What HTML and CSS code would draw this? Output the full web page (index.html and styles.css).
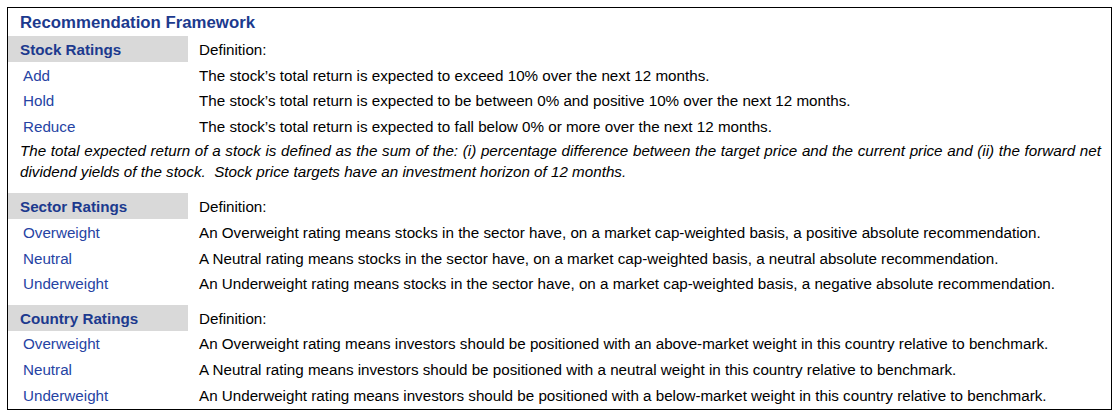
FILE: index.html
```html
<!DOCTYPE html>
<html>
<head>
<meta charset="utf-8">
<link rel="stylesheet" href="styles.css">
</head>
<body>
<div class="frame">
  <div class="title">Recommendation Framework</div>

  <div class="section">
    <div class="head-label">Stock Ratings</div><div class="head-def">Definition:</div>
    <div class="label">Add</div><div class="def">The stock’s total return is expected to exceed 10% over the next 12 months.</div>
    <div class="label">Hold</div><div class="def">The stock’s total return is expected to be between 0% and positive 10% over the next 12 months.</div>
    <div class="label">Reduce</div><div class="def">The stock’s total return is expected to fall below 0% or more over the next 12 months.</div>
  </div>
  <p class="note">The total expected return of a stock is defined as the sum of the: (i) percentage difference between the target price and the current price and (ii) the forward net dividend yields of the stock.&nbsp; Stock price targets have an investment horizon of 12 months.</p>

  <div class="section">
    <div class="head-label">Sector Ratings</div><div class="head-def">Definition:</div>
    <div class="label">Overweight</div><div class="def">An Overweight rating means stocks in the sector have, on a market cap-weighted basis, a positive absolute recommendation.</div>
    <div class="label">Neutral</div><div class="def">A Neutral rating means stocks in the sector have, on a market cap-weighted basis, a neutral absolute recommendation.</div>
    <div class="label">Underweight</div><div class="def">An Underweight rating means stocks in the sector have, on a market cap-weighted basis, a negative absolute recommendation.</div>
  </div>

  <div class="section">
    <div class="head-label">Country Ratings</div><div class="head-def">Definition:</div>
    <div class="label">Overweight</div><div class="def">An Overweight rating means investors should be positioned with an above-market weight in this country relative to benchmark.</div>
    <div class="label">Neutral</div><div class="def">A Neutral rating means investors should be positioned with a neutral weight in this country relative to benchmark.</div>
    <div class="label">Underweight</div><div class="def">An Underweight rating means investors should be positioned with a below-market weight in this country relative to benchmark.</div>
  </div>
</div>
</body>
</html>
```

FILE: styles.css
```css
html, body {
  margin: 0;
  padding: 0;
  background: #ffffff;
}
body {
  padding: 7px;
  font-family: "Liberation Sans", Arial, sans-serif;
  color: #000000;
}
.frame {
  width: 1105px;
  height: 403px;
  box-sizing: border-box;
  border: 1px solid #000000;
}
.title {
  height: 28px;
  line-height: 29px;
  padding-left: 12px;
  font-size: 16.8px;
  font-weight: bold;
  color: #1c3a8e;
}
.section {
  display: grid;
  grid-template-columns: 180px 1fr;
  grid-auto-rows: 25.6px;
  font-size: 15.2px;
  line-height: 27px;
}
.section + .section {
  margin-top: 9px;
}
.head-label {
  background: #d9d9d9;
  height: 26px;
  padding-left: 12px;
  font-weight: bold;
  color: #1c3a8e;
}
.head-def,
.def {
  padding-left: 11px;
  white-space: nowrap;
}
.label {
  padding-left: 15px;
  color: #2643a3;
}
.note {
  margin: 0;
  padding: 2px 10px 11px 12px;
  font-size: 15.2px;
  line-height: 21px;
  font-style: italic;
  text-align: justify;
}
```
